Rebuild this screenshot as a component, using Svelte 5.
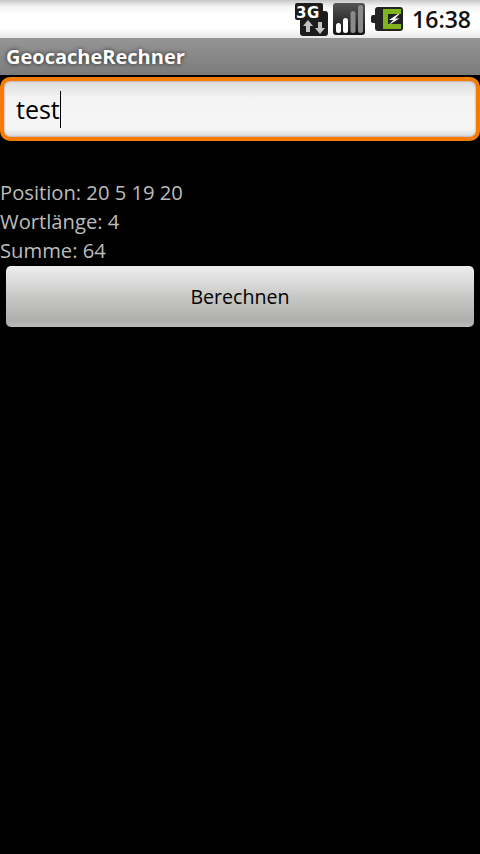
<script>
	const results = ['Position: 20 5 19 20', 'Wortlänge: 4', 'Summe: 64'];
</script>

<div class="screen">
	<header class="status">
		<svg class="net" width="33" height="36" viewBox="0 0 33 36">
			<rect x="5" y="10" width="28" height="25" rx="3" fill="#1c1c1c" />
			<rect x="0" y="2" width="28" height="17" rx="2" fill="#1c1c1c" />
			<text x="1" y="16.500" class="net-label">3G</text>
			<path d="M11 31v-6H8l5-6 5 6h-3v6zM23 21v6h-3l5 6 5-6h-3v-6z" fill="#c4c4c4" />
		</svg>
		<svg class="signal" width="32" height="32" viewBox="0 0 32 32">
			<rect width="32" height="32" rx="3" fill="url(#sig)" />
			<rect x="3" y="20" width="5" height="10" rx="2.5" fill="#fff" />
			<rect x="10" y="15" width="5" height="15" rx="2.5" fill="#fff" />
			<rect x="17.500" y="8" width="5" height="22" rx="2.5" fill="#8a8a8a" />
			<rect x="25" y="2" width="5" height="28" rx="2.5" fill="#8a8a8a" />
			<defs>
				<linearGradient id="sig" x1="0" y1="0" x2="0" y2="1">
					<stop offset="0" stop-color="#555" />
					<stop offset="1" stop-color="#111" />
				</linearGradient>
			</defs>
		</svg>
		<svg class="battery" width="32" height="24" viewBox="0 0 32 24">
			<path d="M7 0h22a3 3 0 0 1 3 3v18a3 3 0 0 1-3 3H7a3 3 0 0 1-3-3v-5H2a2 2 0 0 1-2-2v-4a2 2 0 0 1 2-2h2V3a3 3 0 0 1 3-3z" fill="#222" />
			<path d="M12 2h18v5H17v10h13v5H12z" fill="#7fb51a" />
			<path d="M27 7l-9 6h4.500l-5 5 11-6.500h-4.500l4.500-4.500z" fill="#fff" />
		</svg>
		<span class="clock">16:38</span>
	</header>

	<div class="titlebar">GeocacheRechner</div>

	<div class="field">
		<div class="input"><span class="value">test</span><span class="caret"></span></div>
	</div>

	<div class="results">
		{#each results as line}
			<div class="line">{line}</div>
		{/each}
	</div>

	<div class="actions">
		<button class="calc">Berechnen</button>
	</div>
</div>

<style>
	:global(body) {
		background: #000;
	}

	.screen {
		width: 480px;
		height: 854px;
		background: #000;
		font-family: 'Open Sans', 'DejaVu Sans', sans-serif;
		overflow: hidden;
	}

	.status {
		height: 38px;
		box-sizing: border-box;
		display: flex;
		align-items: center;
		justify-content: flex-end;
		padding-right: 9px;
		background: linear-gradient(to bottom, #c6c6c6 0, #f2f2f2 6px, #fff 14px, #fff 28px, #e8e8e8 38px);
	}

	.net {
		margin-right: 5px;
	}

	.net-label {
		font-family: 'DejaVu Sans', sans-serif;
		font-size: 15px;
		font-weight: 700;
		letter-spacing: 0.5px;
		fill: #fff;
	}

	.signal {
		margin-right: 6px;
	}

	.battery {
		margin-right: 9px;
	}

	.clock {
		font-size: 23px;
		font-weight: 600;
		color: #111;
	}

	.titlebar {
		height: 38px;
		box-sizing: border-box;
		padding-left: 6px;
		line-height: 37px;
		font-size: 20px;
		font-weight: 700;
		color: #fff;
		text-shadow: 0 0 4px #222;
		background: linear-gradient(to bottom, #959595, #7b7b7b);
		border-bottom: 1px solid #000;
	}

	.field {
		height: 65px;
		box-sizing: border-box;
		margin-top: 1px;
	}

	.input {
		height: 64px;
		box-sizing: border-box;
		border: 4px solid #f57c00;
		border-radius: 10px;
		padding-left: 12px;
		display: flex;
		align-items: center;
		background: linear-gradient(to bottom, #dcdcdc, #f3f3f3 30%, #f6f6f6 85%, #d8d8d8);
		box-shadow: inset 0 0 2px #a66;
	}

	.value {
		font-size: 25px;
		color: #000;
	}

	.caret {
		width: 1px;
		height: 37px;
		background: #000;
	}

	.results {
		padding-top: 36px;
	}

	.line {
		height: 29px;
		line-height: 29px;
		font-size: 20.2px;
		color: #bcbcbc;
	}

	.actions {
		padding: 1px 6px 0;
	}

	.calc {
		display: block;
		width: 100%;
		height: 61px;
		border: none;
		border-radius: 5px;
		font-family: inherit;
		font-size: 19.6px;
		color: #000;
		background: linear-gradient(to bottom, #eeeeee, #c8c9c7 50%, #aeafad 90%, #bcbdbb);
	}
</style>
